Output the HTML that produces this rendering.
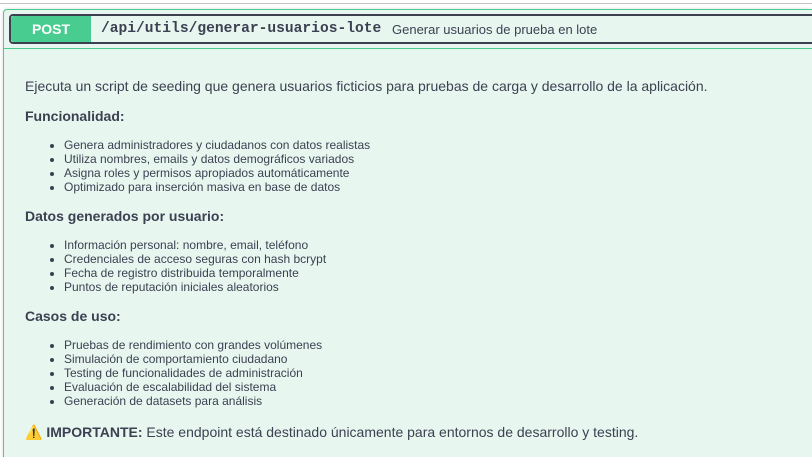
<!DOCTYPE html>
<html><head><meta charset="utf-8"><style>
html,body{margin:0;width:812px;height:457px;overflow:hidden}
body{background:#fff;font-family:"Liberation Sans",Arial,sans-serif;color:#3b4151;position:relative}
.top{position:absolute;left:0;top:3px;width:812px;height:1px;background:#c4c4c4}
.block{position:absolute;left:3px;top:9px;width:808px;height:448px;border:1px solid #49cc90;border-right:none;border-bottom:none;border-radius:4px 0 0 0;background:#e8f6f0;box-shadow:0 0 3px rgba(0,0,0,.15);overflow:hidden}
.sum{position:absolute;left:5px;top:4px;width:900px;height:26px;border:2px solid #3b4151;border-radius:4px}
.badge{position:absolute;left:0;top:0;width:80px;height:26px;background:#49cc90;color:#fff;font-weight:bold;font-size:14px;text-align:center;line-height:26px;border-radius:3px 0 0 3px}
.path{position:absolute;left:90px;top:0;line-height:27px;font-family:"Liberation Mono",monospace;font-weight:bold;font-size:14.6px}
.desc{position:absolute;left:381px;top:0;line-height:27px;font-size:13px}
.line{position:absolute;left:0;top:38px;width:900px;height:1px;background:#49cc90}
.c{position:absolute;left:21px;top:0}
p,h4,ul{margin:0;position:absolute;white-space:nowrap}
p{font-size:14px}
h4{font-size:14px;font-weight:bold}
ul{font-size:12px;line-height:14px;padding-left:39px;left:0}
</style></head><body>
<div class="top"></div>
<div class="block">
<div class="sum"><div class="badge">POST</div><div class="path">/api/utils/generar-usuarios-lote</div><div class="desc">Generar usuarios de prueba en lote</div></div>
<div class="line"></div>
<div class="c">
<p style="top:68px">Ejecuta un script de seeding que genera usuarios ficticios para pruebas de carga y desarrollo de la aplicación.</p>
<h4 style="top:98px">Funcionalidad:</h4>
<ul style="top:128px"><li>Genera administradores y ciudadanos con datos realistas</li><li>Utiliza nombres, emails y datos demográficos variados</li><li>Asigna roles y permisos apropiados automáticamente</li><li>Optimizado para inserción masiva en base de datos</li></ul>
<h4 style="top:198px">Datos generados por usuario:</h4>
<ul style="top:228px"><li>Información personal: nombre, email, teléfono</li><li>Credenciales de acceso seguras con hash bcrypt</li><li>Fecha de registro distribuida temporalmente</li><li>Puntos de reputación iniciales aleatorios</li></ul>
<h4 style="top:298px">Casos de uso:</h4>
<ul style="top:328px"><li>Pruebas de rendimiento con grandes volúmenes</li><li>Simulación de comportamiento ciudadano</li><li>Testing de funcionalidades de administración</li><li>Evaluación de escalabilidad del sistema</li><li>Generación de datasets para análisis</li></ul>
<p style="top:414px"><span style="color:#f0a030">⚠️</span> <b>IMPORTANTE:</b> Este endpoint está destinado únicamente para entornos de desarrollo y testing.</p>
</div>
</div>
</body></html>
